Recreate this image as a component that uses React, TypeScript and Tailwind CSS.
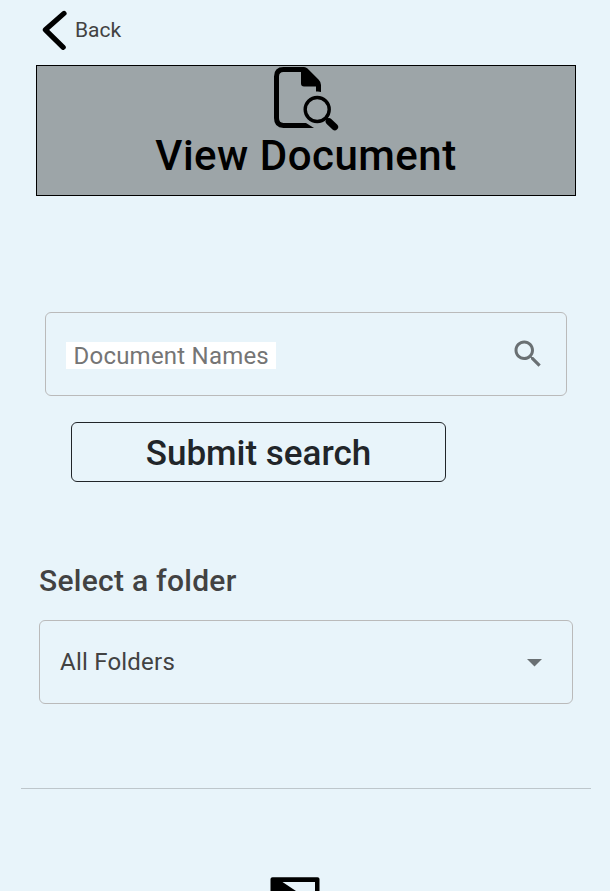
import React from "react";

function BackIcon() {
  return (
    <svg className="block h-[40px] w-[26px]" viewBox="0 0 26 40" fill="none">
      <path d="M23 3.4 L4.4 19.8 L22.2 37.3" stroke="#000" strokeWidth="5.2" strokeLinecap="round" strokeLinejoin="round" />
    </svg>
  );
}

function DocumentSearchIcon() {
  return (
    <svg className="block h-[65px] w-[66px] shrink-0" viewBox="0 0 66 65" fill="none">
      <path d="M28 3.4 H10.5 Q3.5 3.4 3.5 10.4 V52 Q3.5 59.4 10.5 59.4 H33" stroke="#000" strokeWidth="5" />
      <path d="M30 56.9 H33 L41 61.9 H30 Z" fill="#000" />
      <path d="M26 .9 H31 Q33 .9 34.5 2.4 L45.5 13.5 Q48 16 48 19 V26 Q45.5 25 43 25.6 V20.5 H31 Q28 20.5 28 17.5 V5.9 H26 Z" fill="#000" />
      <circle cx="44.2" cy="43.5" r="12" stroke="#000" strokeWidth="3.4" />
      <path d="M56 55.5 L61.8 61" stroke="#000" strokeWidth="6.6" strokeLinecap="round" />
      <path d="M52.5 52 L57 56" stroke="#000" strokeWidth="3" />
    </svg>
  );
}

function SearchIcon() {
  return (
    <svg className="block size-9" viewBox="0 0 24 24" fill="#6a7073">
      <path d="M15.5 14h-.79l-.28-.27C15.41 12.59 16 11.11 16 9.5 16 5.91 13.09 3 9.5 3S3 5.91 3 9.5 5.91 16 9.5 16c1.61 0 3.09-.59 4.23-1.57l.27.28v.79l5 4.99L20.49 19l-4.99-5zm-6 0C7.01 14 5 11.99 5 9.5S7.01 5 9.5 5 14 7.01 14 9.5 11.99 14 9.5 14z" />
    </svg>
  );
}

export default function App() {
  return (
    <div className="flex h-[891px] w-[610px] flex-col items-start overflow-hidden bg-[#e8f4fa] font-['Roboto',sans-serif]">
      <a className="mt-[10px] ml-[41px] flex h-[40px] items-center">
        <BackIcon />
        <span className="ml-[8px] text-[21px] leading-[30px] text-[#424242]">Back</span>
      </a>

      <header className="mt-[15px] ml-[36px] flex h-[131px] w-[540px] flex-col items-center border border-black bg-[#9da5a8]">
        <DocumentSearchIcon />
        <h1 className="text-[42px] leading-[49px] font-medium tracking-[0.5px] whitespace-nowrap text-black">View Document</h1>
      </header>

      <div className="mt-[116px] ml-[45px] flex h-[84px] w-[522px] items-center justify-between rounded-[6px] border border-[#bababa] pr-[20px] pl-[20px]">
        <div className="mt-[3px] flex h-[27px] w-[210px] items-center bg-white pl-[7.5px] text-[24px] tracking-[0.22px] whitespace-nowrap text-[#757575]">
          Document Names
        </div>
        <SearchIcon />
      </div>

      <button className="mt-[26px] ml-[71px] flex h-[60px] w-[375px] items-center justify-center rounded-[6px] border border-[#212529] pt-[4px] text-[35px] leading-[40px] font-medium text-[#212529]">
        Submit search
      </button>

      <h2 className="mt-[81px] ml-[39px] text-[30px] leading-[36px] font-medium tracking-[0.27px] text-[#424242]">Select a folder</h2>

      <div className="mt-[21px] ml-[39px] flex h-[84px] w-[534px] items-center justify-between rounded-[6px] border border-[#bababa] pr-[30px] pl-[20px]">
        <span className="text-[24px] tracking-[0.22px] text-[#424242]">All Folders</span>
        <svg className="mt-[2px] h-[8px] w-[15px]" viewBox="0 0 15 8" fill="#6a7073">
          <path d="M0 0 H15 L7.5 7.5 Z" />
        </svg>
      </div>

      <div className="mt-[84px] ml-[21px] h-px w-[570px] bg-[#bdc6cb]" />

      <svg className="mt-[88px] ml-[270px] block h-[14px] w-[50px] shrink-0" viewBox="0 0 50 14">
        <path d="M0.5 14 V2 Q0.5 0.2 2.5 0.2 H47.5 Q49.5 0.2 49.5 2 V14 H45 V5 H12.5 L26 14 Z" fill="#000" />
      </svg>
    </div>
  );
}
